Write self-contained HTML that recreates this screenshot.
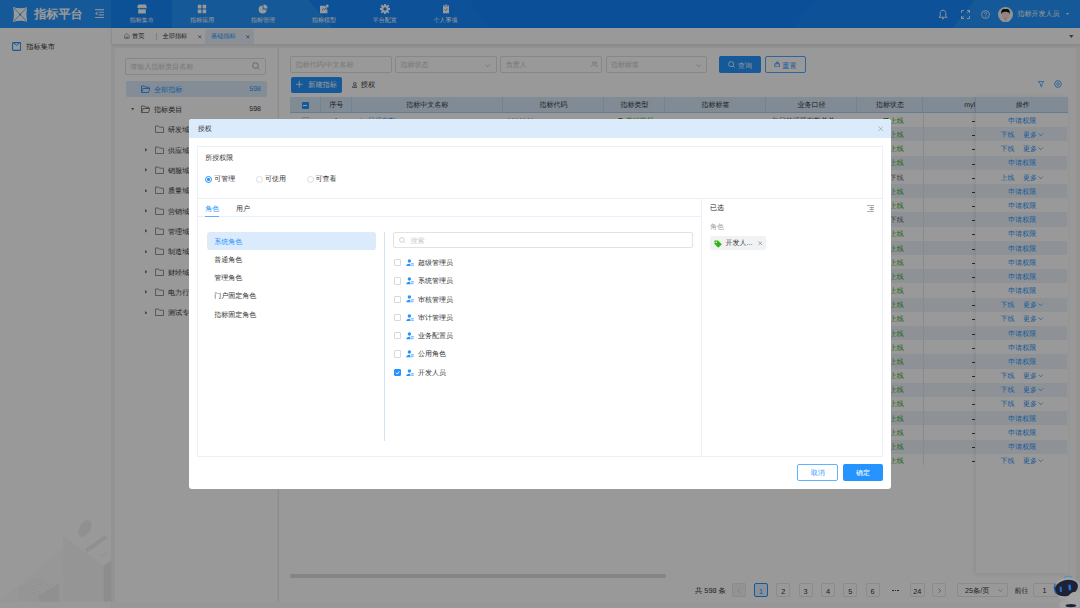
<!DOCTYPE html>
<html lang="zh">
<head>
<meta charset="utf-8">
<title>指标平台</title>
<style>
*{box-sizing:border-box;margin:0;padding:0}
html,body{width:1080px;height:608px;overflow:hidden;background:#f5f5f6;font-family:"Liberation Sans",sans-serif;font-size:7px;color:#333;text-rendering:geometricPrecision}
#app{position:absolute;left:0;top:0;width:1080px;height:608px;overflow:hidden;background:#f5f5f6}
#app div,#app svg,#app span{position:absolute}
.t{white-space:nowrap;line-height:10px;font-size:7px;color:#333}
.w{color:#fff}.p{color:#2594fe}.g{color:#2aa515}
.inp{border:1px solid #e2e2e2;border-radius:2px;background:#fff}
.ph{color:#c9c9c9}
.hl{background:#dcebfb}
.pg{top:583.4px;height:13.6px;width:14px;border:1px solid #e8e8e8;border-radius:2px;background:#fff}
.card{border:1px solid #edf0f3;background:#fff}
.rd{width:7px;height:7px;border:1px solid #dcdcdc;border-radius:50%;background:#fff}
.ck{width:7.4px;height:7.4px;border:1px solid #d9d9d9;border-radius:1px;background:#fff}
</style>
</head>
<body>
<div id="app">
<div style="left:0px;top:0px;width:1080px;height:27.8px;background:#2594fe"></div>
<svg style="left:0px;top:0px;width:1080px;height:27.8px" viewBox="0 0 1080 27.8"><path d="M308.3 0H974.5L953 27.8H332.5z" fill="#1688fd"/><path d="M469 0H815.5L793 27.8H490.5z" fill="#1284fc"/></svg>
<div style="left:111.3px;top:0px;width:60.7px;height:27.8px;background:#1586f8"></div>
<svg style="left:12.8px;top:6.8px;width:14.4px;height:15px" viewBox="0 0 14.4 15"><path d="M0 0Q7.2 2.6 14.4 0Q12.6 7.5 14.4 15Q7.2 12.4 0 15Q1.8 7.5 0 0z" fill="#fff"/><path d="M1 1l12.4 13M13.4 1L1 14" stroke="#2594fe" stroke-width=".7"/><circle cx="7.2" cy="7.5" r=".9" fill="#2594fe"/></svg>
<div class="t" style="top:10.53px;left:34.2px;font-size:12.1px;color:#fff;font-weight:bold;line-height:16px;margin-top:-4.6px;">指标平台</div>
<svg style="left:95px;top:9.2px;width:9px;height:9.2px" viewBox="0 0 9 9.2"><path d="M0 .6h9M3.6 3.3h5.4M3.6 5.9h5.4M0 8.6h9" stroke="#dcebff" stroke-width="1.1"/><path d="M2.4 2.6v4L0 4.6z" fill="#dcebff"/></svg>
<svg style="left:136.65px;top:4px;width:10px;height:10px" viewBox="0 0 10 10"><path d="M1.2 .6h7.6l1 2.8c0 1.3-1.7 1.3-1.9 .2-.2 1.1-1.9 1.1-2 0-.2 1.1-1.8 1.1-2 0C3.8 4.7 2 4.7 .2 3.4z" fill="#fff"/><path d="M1.2 5.3h7.6V9.5H1.2z" fill="#fff"/></svg>
<div class="t" style="top:15.56px;left:81.65px;width:120px;text-align:center;font-size:6px;color:#fff;">指标集市</div>
<svg style="left:197.3px;top:4px;width:10px;height:10px" viewBox="0 0 10 10"><rect x=".8" y=".8" width="3.6" height="3.6" rx=".6" fill="#fff"/><rect x="5.6" y=".8" width="3.6" height="3.6" rx=".6" fill="#fff"/><rect x=".8" y="5.6" width="3.6" height="3.6" rx=".6" fill="#fff"/><rect x="5.6" y="5.6" width="3.6" height="3.6" rx=".6" fill="#fff"/></svg>
<div class="t" style="top:15.56px;left:142.3px;width:120px;text-align:center;font-size:6px;color:#fff;">指标应用</div>
<svg style="left:258px;top:4px;width:10px;height:10px" viewBox="0 0 10 10"><path d="M4.6 1.4A4 4 0 1 0 8.6 5.4H4.6z" fill="#fff"/><path d="M5.5 .4A4 4 0 0 1 9.5 4.4H5.5z" fill="#fff"/></svg>
<div class="t" style="top:15.56px;left:203px;width:120px;text-align:center;font-size:6px;color:#fff;">指标管理</div>
<svg style="left:319px;top:4px;width:10px;height:10px" viewBox="0 0 10 10"><path d="M1 1.8h5.2v1.2H2.2v5h5V5.6h1.2V9.2H1z" fill="#fff"/><path d="M2 2.8h5.6v5.6H2z" fill="#fff"/><circle cx="8.2" cy="1.9" r="1.5" fill="#fff"/><path d="M3 6.6l1.5-2 1.2 1 1.3-1.8" stroke="#2594fe" stroke-width=".8" fill="none"/></svg>
<div class="t" style="top:15.56px;left:264px;width:120px;text-align:center;font-size:6px;color:#fff;">指标模型</div>
<svg style="left:379.7px;top:4px;width:10px;height:10px" viewBox="0 0 10 10"><rect x="4.1" y="-.3" width="1.8" height="2.6" rx=".3" fill="#fff" transform="rotate(0 5 5)"/><rect x="4.1" y="-.3" width="1.8" height="2.6" rx=".3" fill="#fff" transform="rotate(45 5 5)"/><rect x="4.1" y="-.3" width="1.8" height="2.6" rx=".3" fill="#fff" transform="rotate(90 5 5)"/><rect x="4.1" y="-.3" width="1.8" height="2.6" rx=".3" fill="#fff" transform="rotate(135 5 5)"/><rect x="4.1" y="-.3" width="1.8" height="2.6" rx=".3" fill="#fff" transform="rotate(180 5 5)"/><rect x="4.1" y="-.3" width="1.8" height="2.6" rx=".3" fill="#fff" transform="rotate(225 5 5)"/><rect x="4.1" y="-.3" width="1.8" height="2.6" rx=".3" fill="#fff" transform="rotate(270 5 5)"/><rect x="4.1" y="-.3" width="1.8" height="2.6" rx=".3" fill="#fff" transform="rotate(315 5 5)"/><circle cx="5" cy="5" r="3.7" fill="#fff"/><circle cx="5" cy="5" r="1.7" fill="#1688fd"/></svg>
<div class="t" style="top:15.56px;left:324.7px;width:120px;text-align:center;font-size:6px;color:#fff;">平台配置</div>
<svg style="left:440.5px;top:4px;width:10px;height:10px" viewBox="0 0 10 10"><path d="M2 1.5h6V9.3H2z" fill="#fff"/><path d="M3.7 .5h2.6v1.8H3.7z" fill="#fff" stroke="#2594fe" stroke-width=".5"/><path d="M3.6 5.6l1 1 1.8-2" stroke="#2594fe" stroke-width=".8" fill="none"/></svg>
<div class="t" style="top:15.56px;left:385.5px;width:120px;text-align:center;font-size:6px;color:#fff;">个人事项</div>
<svg style="left:938px;top:9px;width:10px;height:11px" viewBox="0 0 10 11"><path d="M5 1.2C3 1.2 2.2 2.8 2.2 4.5V7L1 8.3h8L7.8 7V4.5C7.8 2.8 7 1.2 5 1.2zM4 9.7h2" fill="none" stroke="#fff" stroke-width=".9"/></svg>
<svg style="left:961px;top:10px;width:9px;height:9px" viewBox="0 0 9 9"><path d="M.5 3V.5H3M6 .5h2.5V3M8.5 6v2.5H6M3 8.5H.5V6M6.4 2.6L8.4 .6M2.6 6.4L.6 8.4" fill="none" stroke="#fff" stroke-width=".85"/></svg>
<svg style="left:981px;top:10px;width:9px;height:9px" viewBox="0 0 9 9"><circle cx="4.5" cy="4.5" r="3.9" fill="none" stroke="#fff" stroke-width=".8"/><path d="M3.3 3.6c0-1.6 2.4-1.6 2.4 0 0 .9-1.2.9-1.2 1.9M4.5 6.3v.8" fill="none" stroke="#fff" stroke-width=".8"/></svg>
<svg style="left:998px;top:6.8px;width:15px;height:15px" viewBox="0 0 15 15"><defs><clipPath id="avc"><circle cx="7.5" cy="7.5" r="7.5"/></clipPath></defs><g clip-path="url(#avc)"><rect width="15" height="15" fill="#f4f4f4"/><path d="M2 15C2 11.5 13 11.5 13 15z" fill="#fafafa"/><rect x="6.2" y="10" width="2.6" height="4.5" rx="1" fill="#f3d2c6"/><ellipse cx="7.5" cy="7.8" rx="3.6" ry="4.3" fill="#f6ddd4"/><path d="M3.3 7.5C2.6 1.8 6 1.6 7.5 2.2 9 1.6 12.4 1.8 11.7 7.5 11.2 5.8 10.5 4.9 9.8 5.2 8.5 4.6 6.5 4.6 5.2 5.2 4.5 4.9 3.8 5.8 3.3 7.5z" fill="#111"/><path d="M6.6 11.3h1.8v.6H6.6z" fill="#e58a8a"/></g></svg>
<div class="t" style="top:10.47px;left:1017.5px;color:#fff;">指标开发人员</div>
<svg style="left:1066.4px;top:13.3px;width:3px;height:2px" viewBox="0 0 3 2"><path d="M0 0h3L1.5 2z" fill="#e6f1ff"/></svg>
<div style="left:0px;top:27.8px;width:111px;height:581px;background:#fff"></div>
<svg style="left:11.7px;top:42px;width:9.2px;height:9px" viewBox="0 0 9.2 9"><rect x=".6" y=".6" width="8" height="7.8" rx=".8" fill="none" stroke="#2594fe" stroke-width="1.1"/><path d="M2 1l2.6 2.6L7.2 1" fill="none" stroke="#2594fe" stroke-width="1"/></svg>
<div class="t" style="top:42.49px;left:26.3px;font-size:7.2px;">指标集市</div>
<svg style="left:0px;top:488px;width:112px;height:114px" viewBox="0 0 112 114"><path d="M0 113.5L63 60V113.5z" fill="#fcfcfc"/><path d="M63.2 47.4L103.6 78V113.5H63.2z" fill="#f8f8f8"/><path d="M103.6 78L111.5 72V113.5H103.6z" fill="#ececec"/><ellipse cx="84.9" cy="40.5" rx="5.5" ry="9" transform="rotate(32 84.9 40.5)" fill="#f0f0f0"/><path d="M85 61L105 47l2 3.5L87 64.5z" fill="#f0f0f0"/><path d="M99.5 66l2.5 2.5 5-4" fill="none" stroke="#f0f0f0" stroke-width="1"/><path d="M38.5 108L59.2 95V113.5H38.5z" fill="#f0f0f0"/><path d="M19.7 98L38.5 108V113.5H17z" fill="#f8f8f8"/><path d="M35.5 89.6L38.5 91.2L41.5 89.6" fill="none" stroke="#f1f1f1" stroke-width=".9"/><path d="M32.5 91.2L38.5 94.4L44.5 91.2" fill="none" stroke="#f1f1f1" stroke-width=".9"/><path d="M29.5 92.8L38.5 97.6L47.5 92.8" fill="none" stroke="#f1f1f1" stroke-width=".9"/><path d="M26.5 94.4L38.5 100.8L50.5 94.4" fill="none" stroke="#f1f1f1" stroke-width=".9"/><path d="M23.5 96.0L38.5 104.0L53.5 96.0" fill="none" stroke="#f1f1f1" stroke-width=".9"/><path d="M20.5 97.6L38.5 107.2L56.5 97.6" fill="none" stroke="#f1f1f1" stroke-width=".9"/></svg>
<div style="left:111.5px;top:27.8px;width:968.5px;height:16.6px;background:#fff;box-shadow:0 1px 3px rgba(0,0,0,.1)"></div>
<div style="left:111.5px;top:601.8px;width:968.5px;height:6.2px;background:#fcfcfd"></div>
<svg style="left:124.2px;top:33.3px;width:5.6px;height:5.8px" viewBox="0 0 7 7"><path d="M.5 3.3L3.5 .6l3 2.7V6.5h-6zM2.7 6.5v-1.8h1.6v1.8" fill="none" stroke="#666" stroke-width=".7"/></svg>
<div class="t" style="top:31.88px;left:132px;font-size:6.2px;">首页</div>
<div style="left:156px;top:33px;width:0.6px;height:6.5px;background:#d4d4d4"></div>
<div class="t" style="top:31.88px;left:162.5px;font-size:6.2px;">全部指标</div>
<svg style="left:198.4px;top:35.2px;width:3.6px;height:3.6px" viewBox="0 0 3.6 3.6"><path d="M.3 .3l3 3M3.3 .3l-3 3" stroke="#555" stroke-width=".7"/></svg>
<div style="left:205px;top:28.6px;width:48.6px;height:15.8px;background:#e6f0fb;border-radius:2px 2px 0 0"></div>
<div class="t" style="top:31.88px;left:211px;font-size:6.2px;color:#2594fe;">基础指标</div>
<svg style="left:246.4px;top:35.2px;width:3.6px;height:3.6px" viewBox="0 0 3.6 3.6"><path d="M.3 .3l3 3M3.3 .3l-3 3" stroke="#555" stroke-width=".7"/></svg>
<svg style="left:1069.3px;top:35px;width:4.6px;height:3px" viewBox="0 0 4.6 3"><path d="M0 0h4.6L2.3 3z" fill="#666"/></svg>
<div style="left:115.2px;top:48.2px;width:162.3px;height:553.6px;background:#fff;border-radius:2px 0 0 2px"></div>
<div class="inp" style="left:125px;top:58px;width:141.4px;height:16.6px;"></div>
<div class="t ph" style="top:63.07px;left:130.3px;">请输入指标类目名称</div>
<svg style="left:252px;top:62.3px;width:8px;height:8px" viewBox="0 0 8 8"><circle cx="3.5" cy="3.5" r="2.8" fill="none" stroke="#999" stroke-width="0.8"/><path d="M5.6 5.6L7.4 7.4" stroke="#999" stroke-width="0.8"/></svg>
<div class="hl" style="left:125.5px;top:81px;width:141px;height:16.2px;border-radius:2px"></div>
<svg style="left:140.5px;top:85px;width:9.5px;height:8.5px" viewBox="0 0 9.5 8.5"><path d="M.5 7.5V1h3l1 1.2h3.5v1.3M.5 7.5L2 3.5h7L7.5 7.5z" fill="none" stroke="#2594fe" stroke-width=".9"/></svg>
<div class="t" style="top:84.98px;left:154px;font-size:7.1px;color:#2594fe;">全部指标</div>
<div class="t" style="top:84.97px;left:141px;width:120px;text-align:right;color:#2594fe;">598</div>
<svg style="left:130.6px;top:108.4px;width:3.4px;height:2.4px" viewBox="0 0 3.4 2.4"><path d="M0 0h3.4L1.7 2.4z" fill="#777"/></svg>
<svg style="left:140.5px;top:104.8px;width:9.5px;height:8.5px" viewBox="0 0 9.5 8.5"><path d="M.5 7.5V1h3l1 1.2h3.5v1.3M.5 7.5L2 3.5h7L7.5 7.5z" fill="none" stroke="#777" stroke-width=".9"/></svg>
<div class="t" style="top:104.98px;left:154px;font-size:7.1px;">指标类目</div>
<div class="t" style="top:104.97px;left:141px;width:120px;text-align:right;">598</div>
<svg style="left:155px;top:125.3px;width:9.5px;height:8.5px" viewBox="0 0 9.5 8.5"><path d="M.5 1h3l1 1.2h4v5.3h-8z" fill="none" stroke="#7a7a7a" stroke-width=".8"/></svg>
<div class="t" style="top:125.38px;left:168px;font-size:7.1px;">研发域</div>
<svg style="left:144.7px;top:148.13px;width:2.5px;height:3.6px" viewBox="0 0 2.5 3.6"><path d="M0 0v3.6L2.5 1.8z" fill="#777"/></svg>
<svg style="left:155px;top:145.63px;width:9.5px;height:8.5px" viewBox="0 0 9.5 8.5"><path d="M.5 1h3l1 1.2h4v5.3h-8z" fill="none" stroke="#7a7a7a" stroke-width=".8"/></svg>
<div class="t" style="top:145.71px;left:168px;font-size:7.1px;">供应域</div>
<svg style="left:144.7px;top:168.46px;width:2.5px;height:3.6px" viewBox="0 0 2.5 3.6"><path d="M0 0v3.6L2.5 1.8z" fill="#777"/></svg>
<svg style="left:155px;top:165.96px;width:9.5px;height:8.5px" viewBox="0 0 9.5 8.5"><path d="M.5 1h3l1 1.2h4v5.3h-8z" fill="none" stroke="#7a7a7a" stroke-width=".8"/></svg>
<div class="t" style="top:166.04px;left:168px;font-size:7.1px;">销服域</div>
<svg style="left:144.7px;top:188.79px;width:2.5px;height:3.6px" viewBox="0 0 2.5 3.6"><path d="M0 0v3.6L2.5 1.8z" fill="#777"/></svg>
<svg style="left:155px;top:186.29px;width:9.5px;height:8.5px" viewBox="0 0 9.5 8.5"><path d="M.5 1h3l1 1.2h4v5.3h-8z" fill="none" stroke="#7a7a7a" stroke-width=".8"/></svg>
<div class="t" style="top:186.37px;left:168px;font-size:7.1px;">质量域</div>
<svg style="left:144.7px;top:209.12px;width:2.5px;height:3.6px" viewBox="0 0 2.5 3.6"><path d="M0 0v3.6L2.5 1.8z" fill="#777"/></svg>
<svg style="left:155px;top:206.62px;width:9.5px;height:8.5px" viewBox="0 0 9.5 8.5"><path d="M.5 1h3l1 1.2h4v5.3h-8z" fill="none" stroke="#7a7a7a" stroke-width=".8"/></svg>
<div class="t" style="top:206.7px;left:168px;font-size:7.1px;">营销域</div>
<svg style="left:144.7px;top:229.45px;width:2.5px;height:3.6px" viewBox="0 0 2.5 3.6"><path d="M0 0v3.6L2.5 1.8z" fill="#777"/></svg>
<svg style="left:155px;top:226.95px;width:9.5px;height:8.5px" viewBox="0 0 9.5 8.5"><path d="M.5 1h3l1 1.2h4v5.3h-8z" fill="none" stroke="#7a7a7a" stroke-width=".8"/></svg>
<div class="t" style="top:227.03px;left:168px;font-size:7.1px;">管理域</div>
<svg style="left:144.7px;top:249.78px;width:2.5px;height:3.6px" viewBox="0 0 2.5 3.6"><path d="M0 0v3.6L2.5 1.8z" fill="#777"/></svg>
<svg style="left:155px;top:247.28px;width:9.5px;height:8.5px" viewBox="0 0 9.5 8.5"><path d="M.5 1h3l1 1.2h4v5.3h-8z" fill="none" stroke="#7a7a7a" stroke-width=".8"/></svg>
<div class="t" style="top:247.36px;left:168px;font-size:7.1px;">制造域</div>
<svg style="left:144.7px;top:270.11px;width:2.5px;height:3.6px" viewBox="0 0 2.5 3.6"><path d="M0 0v3.6L2.5 1.8z" fill="#777"/></svg>
<svg style="left:155px;top:267.61px;width:9.5px;height:8.5px" viewBox="0 0 9.5 8.5"><path d="M.5 1h3l1 1.2h4v5.3h-8z" fill="none" stroke="#7a7a7a" stroke-width=".8"/></svg>
<div class="t" style="top:267.69px;left:168px;font-size:7.1px;">财经域</div>
<svg style="left:144.7px;top:290.44px;width:2.5px;height:3.6px" viewBox="0 0 2.5 3.6"><path d="M0 0v3.6L2.5 1.8z" fill="#777"/></svg>
<svg style="left:155px;top:287.94px;width:9.5px;height:8.5px" viewBox="0 0 9.5 8.5"><path d="M.5 1h3l1 1.2h4v5.3h-8z" fill="none" stroke="#7a7a7a" stroke-width=".8"/></svg>
<div class="t" style="top:288.02px;left:168px;font-size:7.1px;">电力行业</div>
<svg style="left:144.7px;top:310.77px;width:2.5px;height:3.6px" viewBox="0 0 2.5 3.6"><path d="M0 0v3.6L2.5 1.8z" fill="#777"/></svg>
<svg style="left:155px;top:308.27px;width:9.5px;height:8.5px" viewBox="0 0 9.5 8.5"><path d="M.5 1h3l1 1.2h4v5.3h-8z" fill="none" stroke="#7a7a7a" stroke-width=".8"/></svg>
<div class="t" style="top:308.35px;left:168px;font-size:7.1px;">测试专用</div>
<div style="left:277.5px;top:48.2px;width:798.5px;height:553.6px;background:#fff;border-radius:2px;border-left:1px solid #e9ebee"></div>
<div class="inp" style="left:290.3px;top:56.2px;width:101.5px;height:16.4px;"></div>
<div class="t ph" style="top:60.57px;left:295.6px;">指标代码/中文名称</div>
<div class="inp" style="left:395.1px;top:56.2px;width:101.5px;height:16.4px;"></div>
<div class="t ph" style="top:60.57px;left:400.4px;">指标状态</div>
<div class="inp" style="left:500.4px;top:56.2px;width:101.5px;height:16.4px;"></div>
<div class="t ph" style="top:60.57px;left:505.7px;">负责人</div>
<div class="inp" style="left:605.6px;top:56.2px;width:101.5px;height:16.4px;"></div>
<div class="t ph" style="top:60.57px;left:610.9px;">指标标签</div>
<svg style="left:485px;top:63.6px;width:5.5px;height:3.4px" viewBox="0 0 6 4"><path d="M.5 .6L3 3.2 5.5 .6" fill="none" stroke="#b5b5b5" stroke-width="0.8"/></svg>
<svg style="left:695.5px;top:63.6px;width:5.5px;height:3.4px" viewBox="0 0 6 4"><path d="M.5 .6L3 3.2 5.5 .6" fill="none" stroke="#b5b5b5" stroke-width="0.8"/></svg>
<svg style="left:591px;top:61px;width:6.8px;height:6.5px" viewBox="0 0 6.8 6.5"><circle cx="2.8" cy="1.9" r="1.3" fill="none" stroke="#bbb" stroke-width=".7"/><path d="M.4 6C.4 3.4 5.2 3.4 5.2 6M4.6 .8c1.6 0 1.6 2.4 0 2.4M5.4 3.8c.9.3 1.1 1.2 1.1 2.2" fill="none" stroke="#bbb" stroke-width=".7"/></svg>
<div style="left:719px;top:56.2px;width:41.5px;height:16.4px;background:#2594fe;border-radius:2px"></div>
<svg style="left:727.8px;top:60.6px;width:7.2px;height:7.2px" viewBox="0 0 8 8"><circle cx="3.5" cy="3.5" r="2.8" fill="none" stroke="#fff" stroke-width="0.9"/><path d="M5.6 5.6L7.4 7.4" stroke="#fff" stroke-width="0.9"/></svg>
<div class="t" style="top:60.58px;left:737.8px;font-size:7.1px;color:#fff;">查询</div>
<div style="left:765px;top:56.2px;width:41px;height:16.4px;background:#fff;border:1px solid #4fa8ff;border-radius:2px"></div>
<svg style="left:773.5px;top:60.8px;width:6.5px;height:6.5px" viewBox="0 0 8 8"><path d="M1 3.5h6V7.2H1zM2.5 3.5V2.2h3v1.3M4 .3v1.9" fill="none" stroke="#2594fe" stroke-width="1"/></svg>
<div class="t" style="top:60.58px;left:782.3px;font-size:7.1px;color:#2594fe;">重置</div>
<div style="left:291.1px;top:76.5px;width:50.5px;height:16.3px;background:#2594fe;border-radius:2px"></div>
<svg style="left:296.4px;top:81.3px;width:6.6px;height:6.6px" viewBox="0 0 6.6 6.6"><path d="M3.3 0v6.6M0 3.3h6.6" stroke="#fff" stroke-width=".8"/></svg>
<div class="t" style="top:80.49px;left:308.2px;font-size:7.2px;color:#fff;">新建指标</div>
<svg style="left:351.6px;top:81.8px;width:5.6px;height:5.8px" viewBox="0 0 5.6 5.8"><circle cx="2.8" cy="1.7" r="1.3" fill="none" stroke="#444" stroke-width=".7"/><path d="M.4 5.4V4.8C.4 3.5 5.2 3.5 5.2 4.8V5.4z" fill="none" stroke="#444" stroke-width=".7"/></svg>
<div class="t" style="top:80.49px;left:360.7px;font-size:7.2px;">授权</div>
<svg style="left:1037.9px;top:81.4px;width:6.4px;height:6.4px" viewBox="0 0 7 7"><path d="M.5 .5h6L4.2 3.5V6.5L2.8 5.5V3.5z" fill="none" stroke="#2594fe" stroke-width=".8"/></svg>
<svg style="left:1054px;top:80.4px;width:8px;height:8px" viewBox="0 0 8 8"><path d="M.5 4L2.2 .9h3.6L7.5 4 5.8 7.1H2.2z" fill="none" stroke="#2594fe" stroke-width=".8"/><circle cx="4" cy="4" r="1.3" fill="none" stroke="#2594fe" stroke-width=".7"/></svg>
<div style="left:290.4px;top:97px;width:777.4px;height:15.7px;background:#d7e8fb;border-bottom:1px solid #a9cdf2"></div>
<div style="left:319.9px;top:97px;width:0.8px;height:15.7px;background:#c2daf4"></div>
<div class="t" style="top:100.97px;left:276.15px;width:120px;text-align:center;color:#333;">序号</div>
<div style="left:350.8px;top:97px;width:0.8px;height:15.7px;background:#c2daf4"></div>
<div class="t" style="top:100.97px;left:367.25px;width:120px;text-align:center;color:#333;">指标中文名称</div>
<div style="left:502.1px;top:97px;width:0.8px;height:15.7px;background:#c2daf4"></div>
<div class="t" style="top:100.97px;left:493.45px;width:120px;text-align:center;color:#333;">指标代码</div>
<div style="left:603.2px;top:97px;width:0.8px;height:15.7px;background:#c2daf4"></div>
<div class="t" style="top:100.97px;left:574.5px;width:120px;text-align:center;color:#333;">指标类型</div>
<div style="left:664.2px;top:97px;width:0.8px;height:15.7px;background:#c2daf4"></div>
<div class="t" style="top:100.97px;left:655.5px;width:120px;text-align:center;color:#333;">指标标签</div>
<div style="left:765.2px;top:97px;width:0.8px;height:15.7px;background:#c2daf4"></div>
<div class="t" style="top:100.97px;left:751.5px;width:120px;text-align:center;color:#333;">业务口径</div>
<div style="left:856.2px;top:97px;width:0.8px;height:15.7px;background:#c2daf4"></div>
<div class="t" style="top:100.97px;left:830px;width:120px;text-align:center;color:#333;">指标状态</div>
<div style="left:922.2px;top:97px;width:0.8px;height:15.7px;background:#c2daf4"></div>
<div class="t" style="top:100.97px;left:855.1px;width:120px;text-align:right;color:#333;">myl</div>
<div style="left:974.7px;top:97px;width:0.8px;height:15.7px;background:#c2daf4"></div>
<div class="t" style="top:100.97px;left:962.7px;width:120px;text-align:center;color:#333;">操作</div>
<div style="left:301.6px;top:101.6px;width:7.3px;height:7px;background:#2594fe;border-radius:1px"><div style="left:1.6px;top:3px;width:4.1px;height:1px;background:#fff"></div></div>
<div style="left:301.7px;top:116.9px;width:7.2px;height:7.2px;border:1px solid #cfcfcf;border-radius:1px;background:#fff"></div>
<div class="t" style="top:116.97px;left:276.1px;width:120px;text-align:center;color:#333;">1</div>
<div style="left:972.4px;top:121px;width:2.3px;height:0.8px;background:#444"></div>
<div style="left:882.5px;top:117.7px;width:6.5px;height:6.5px;border:1px solid #2aa515;border-radius:1px"></div>
<div class="t" style="top:116.97px;left:889.8px;color:#2aa515;">上线</div>
<div class="t" style="top:116.97px;left:962.3px;width:120px;text-align:center;color:#2594fe;">申请权限</div>
<div class="t" style="top:116.97px;left:357.5px;color:#2594fe;">☆</div>
<div class="t" style="top:116.97px;left:367.8px;color:#2594fe;">日活客数</div>
<div class="t" style="top:116.97px;left:508px;">LLLLLLL</div>
<div style="left:617.5px;top:118.2px;width:5.5px;height:5.5px;border:1px solid #2aa515;border-radius:1px"></div>
<div class="t" style="top:116.97px;left:625.8px;color:#2aa515;">基础指标</div>
<div class="t" style="top:116.97px;left:772px;">每日的活跃客数总单</div>
<div style="left:290.4px;top:127.15px;width:777.1px;height:14.2px;background:#edf4fc"></div>
<div style="left:301.7px;top:131.1px;width:7.2px;height:7.2px;border:1px solid #cfcfcf;border-radius:1px;background:#fff"></div>
<div class="t" style="top:131.14px;left:276.1px;width:120px;text-align:center;color:#333;">2</div>
<div style="left:972.4px;top:135.17px;width:2.3px;height:0.8px;background:#444"></div>
<div style="left:882.5px;top:131.87px;width:6.5px;height:6.5px;border:1px solid #2aa515;border-radius:1px"></div>
<div class="t" style="top:131.14px;left:889.8px;color:#2aa515;">上线</div>
<div class="t" style="top:131.14px;left:1000.5px;color:#2594fe;">下线</div>
<div class="t" style="top:131.14px;left:1023px;color:#2594fe;">更多</div>
<svg style="left:1038px;top:133.07px;width:5.5px;height:3.4px" viewBox="0 0 6 4"><path d="M.5 .6L3 3.2 5.5 .6" fill="none" stroke="#2594fe" stroke-width="0.8"/></svg>
<div style="left:301.7px;top:145.3px;width:7.2px;height:7.2px;border:1px solid #cfcfcf;border-radius:1px;background:#fff"></div>
<div class="t" style="top:145.31px;left:276.1px;width:120px;text-align:center;color:#333;">3</div>
<div style="left:972.4px;top:149.34px;width:2.3px;height:0.8px;background:#444"></div>
<div style="left:882.5px;top:146.04px;width:6.5px;height:6.5px;border:1px solid #2aa515;border-radius:1px"></div>
<div class="t" style="top:145.31px;left:889.8px;color:#2aa515;">上线</div>
<div class="t" style="top:145.31px;left:1000.5px;color:#2594fe;">下线</div>
<div class="t" style="top:145.31px;left:1023px;color:#2594fe;">更多</div>
<svg style="left:1038px;top:147.24px;width:5.5px;height:3.4px" viewBox="0 0 6 4"><path d="M.5 .6L3 3.2 5.5 .6" fill="none" stroke="#2594fe" stroke-width="0.8"/></svg>
<div style="left:290.4px;top:155.55px;width:777.1px;height:14.2px;background:#edf4fc"></div>
<div style="left:301.7px;top:159.5px;width:7.2px;height:7.2px;border:1px solid #cfcfcf;border-radius:1px;background:#fff"></div>
<div class="t" style="top:159.48px;left:276.1px;width:120px;text-align:center;color:#333;">4</div>
<div style="left:972.4px;top:163.51px;width:2.3px;height:0.8px;background:#444"></div>
<div style="left:882.5px;top:160.21px;width:6.5px;height:6.5px;border:1px solid #2aa515;border-radius:1px"></div>
<div class="t" style="top:159.48px;left:889.8px;color:#2aa515;">上线</div>
<div class="t" style="top:159.48px;left:962.3px;width:120px;text-align:center;color:#2594fe;">申请权限</div>
<div style="left:301.7px;top:173.7px;width:7.2px;height:7.2px;border:1px solid #cfcfcf;border-radius:1px;background:#fff"></div>
<div class="t" style="top:173.65px;left:276.1px;width:120px;text-align:center;color:#333;">5</div>
<div style="left:972.4px;top:177.68px;width:2.3px;height:0.8px;background:#444"></div>
<div class="t" style="top:173.65px;left:889.8px;color:#666;">下线</div>
<div class="t" style="top:173.65px;left:1000.5px;color:#2594fe;">上线</div>
<div class="t" style="top:173.65px;left:1023px;color:#2594fe;">更多</div>
<svg style="left:1038px;top:175.58px;width:5.5px;height:3.4px" viewBox="0 0 6 4"><path d="M.5 .6L3 3.2 5.5 .6" fill="none" stroke="#2594fe" stroke-width="0.8"/></svg>
<div style="left:290.4px;top:183.95px;width:777.1px;height:14.2px;background:#edf4fc"></div>
<div style="left:301.7px;top:187.9px;width:7.2px;height:7.2px;border:1px solid #cfcfcf;border-radius:1px;background:#fff"></div>
<div class="t" style="top:187.82px;left:276.1px;width:120px;text-align:center;color:#333;">6</div>
<div style="left:972.4px;top:191.85px;width:2.3px;height:0.8px;background:#444"></div>
<div style="left:882.5px;top:188.55px;width:6.5px;height:6.5px;border:1px solid #2aa515;border-radius:1px"></div>
<div class="t" style="top:187.82px;left:889.8px;color:#2aa515;">上线</div>
<div class="t" style="top:187.82px;left:962.3px;width:120px;text-align:center;color:#2594fe;">申请权限</div>
<div style="left:301.7px;top:202.1px;width:7.2px;height:7.2px;border:1px solid #cfcfcf;border-radius:1px;background:#fff"></div>
<div class="t" style="top:201.99px;left:276.1px;width:120px;text-align:center;color:#333;">7</div>
<div style="left:972.4px;top:206.02px;width:2.3px;height:0.8px;background:#444"></div>
<div style="left:882.5px;top:202.72px;width:6.5px;height:6.5px;border:1px solid #2aa515;border-radius:1px"></div>
<div class="t" style="top:201.99px;left:889.8px;color:#2aa515;">上线</div>
<div class="t" style="top:201.99px;left:962.3px;width:120px;text-align:center;color:#2594fe;">申请权限</div>
<div style="left:290.4px;top:212.35px;width:777.1px;height:14.2px;background:#edf4fc"></div>
<div style="left:301.7px;top:216.3px;width:7.2px;height:7.2px;border:1px solid #cfcfcf;border-radius:1px;background:#fff"></div>
<div class="t" style="top:216.16px;left:276.1px;width:120px;text-align:center;color:#333;">8</div>
<div style="left:972.4px;top:220.19px;width:2.3px;height:0.8px;background:#444"></div>
<div class="t" style="top:216.16px;left:889.8px;color:#666;">下线</div>
<div class="t" style="top:216.16px;left:962.3px;width:120px;text-align:center;color:#2594fe;">申请权限</div>
<div style="left:301.7px;top:230.5px;width:7.2px;height:7.2px;border:1px solid #cfcfcf;border-radius:1px;background:#fff"></div>
<div class="t" style="top:230.33px;left:276.1px;width:120px;text-align:center;color:#333;">9</div>
<div style="left:972.4px;top:234.36px;width:2.3px;height:0.8px;background:#444"></div>
<div style="left:882.5px;top:231.06px;width:6.5px;height:6.5px;border:1px solid #2aa515;border-radius:1px"></div>
<div class="t" style="top:230.33px;left:889.8px;color:#2aa515;">上线</div>
<div class="t" style="top:230.33px;left:962.3px;width:120px;text-align:center;color:#2594fe;">申请权限</div>
<div style="left:290.4px;top:240.75px;width:777.1px;height:14.2px;background:#edf4fc"></div>
<div style="left:301.7px;top:244.7px;width:7.2px;height:7.2px;border:1px solid #cfcfcf;border-radius:1px;background:#fff"></div>
<div class="t" style="top:244.5px;left:276.1px;width:120px;text-align:center;color:#333;">10</div>
<div style="left:972.4px;top:248.53px;width:2.3px;height:0.8px;background:#444"></div>
<div style="left:882.5px;top:245.23px;width:6.5px;height:6.5px;border:1px solid #2aa515;border-radius:1px"></div>
<div class="t" style="top:244.5px;left:889.8px;color:#2aa515;">上线</div>
<div class="t" style="top:244.5px;left:962.3px;width:120px;text-align:center;color:#2594fe;">申请权限</div>
<div style="left:301.7px;top:258.9px;width:7.2px;height:7.2px;border:1px solid #cfcfcf;border-radius:1px;background:#fff"></div>
<div class="t" style="top:258.67px;left:276.1px;width:120px;text-align:center;color:#333;">11</div>
<div style="left:972.4px;top:262.7px;width:2.3px;height:0.8px;background:#444"></div>
<div style="left:882.5px;top:259.4px;width:6.5px;height:6.5px;border:1px solid #2aa515;border-radius:1px"></div>
<div class="t" style="top:258.67px;left:889.8px;color:#2aa515;">上线</div>
<div class="t" style="top:258.67px;left:962.3px;width:120px;text-align:center;color:#2594fe;">申请权限</div>
<div style="left:290.4px;top:269.15px;width:777.1px;height:14.2px;background:#edf4fc"></div>
<div style="left:301.7px;top:273.1px;width:7.2px;height:7.2px;border:1px solid #cfcfcf;border-radius:1px;background:#fff"></div>
<div class="t" style="top:272.84px;left:276.1px;width:120px;text-align:center;color:#333;">12</div>
<div style="left:972.4px;top:276.87px;width:2.3px;height:0.8px;background:#444"></div>
<div style="left:882.5px;top:273.57px;width:6.5px;height:6.5px;border:1px solid #2aa515;border-radius:1px"></div>
<div class="t" style="top:272.84px;left:889.8px;color:#2aa515;">上线</div>
<div class="t" style="top:272.84px;left:962.3px;width:120px;text-align:center;color:#2594fe;">申请权限</div>
<div style="left:301.7px;top:287.3px;width:7.2px;height:7.2px;border:1px solid #cfcfcf;border-radius:1px;background:#fff"></div>
<div class="t" style="top:287.01px;left:276.1px;width:120px;text-align:center;color:#333;">13</div>
<div style="left:972.4px;top:291.04px;width:2.3px;height:0.8px;background:#444"></div>
<div style="left:882.5px;top:287.74px;width:6.5px;height:6.5px;border:1px solid #2aa515;border-radius:1px"></div>
<div class="t" style="top:287.01px;left:889.8px;color:#2aa515;">上线</div>
<div class="t" style="top:287.01px;left:962.3px;width:120px;text-align:center;color:#2594fe;">申请权限</div>
<div style="left:290.4px;top:297.55px;width:777.1px;height:14.2px;background:#edf4fc"></div>
<div style="left:301.7px;top:301.5px;width:7.2px;height:7.2px;border:1px solid #cfcfcf;border-radius:1px;background:#fff"></div>
<div class="t" style="top:301.18px;left:276.1px;width:120px;text-align:center;color:#333;">14</div>
<div style="left:972.4px;top:305.21px;width:2.3px;height:0.8px;background:#444"></div>
<div style="left:882.5px;top:301.91px;width:6.5px;height:6.5px;border:1px solid #2aa515;border-radius:1px"></div>
<div class="t" style="top:301.18px;left:889.8px;color:#2aa515;">上线</div>
<div class="t" style="top:301.18px;left:1000.5px;color:#2594fe;">下线</div>
<div class="t" style="top:301.18px;left:1023px;color:#2594fe;">更多</div>
<svg style="left:1038px;top:303.11px;width:5.5px;height:3.4px" viewBox="0 0 6 4"><path d="M.5 .6L3 3.2 5.5 .6" fill="none" stroke="#2594fe" stroke-width="0.8"/></svg>
<div style="left:301.7px;top:315.7px;width:7.2px;height:7.2px;border:1px solid #cfcfcf;border-radius:1px;background:#fff"></div>
<div class="t" style="top:315.35px;left:276.1px;width:120px;text-align:center;color:#333;">15</div>
<div style="left:972.4px;top:319.38px;width:2.3px;height:0.8px;background:#444"></div>
<div style="left:882.5px;top:316.08px;width:6.5px;height:6.5px;border:1px solid #2aa515;border-radius:1px"></div>
<div class="t" style="top:315.35px;left:889.8px;color:#2aa515;">上线</div>
<div class="t" style="top:315.35px;left:1000.5px;color:#2594fe;">下线</div>
<div class="t" style="top:315.35px;left:1023px;color:#2594fe;">更多</div>
<svg style="left:1038px;top:317.28px;width:5.5px;height:3.4px" viewBox="0 0 6 4"><path d="M.5 .6L3 3.2 5.5 .6" fill="none" stroke="#2594fe" stroke-width="0.8"/></svg>
<div style="left:290.4px;top:325.95px;width:777.1px;height:14.2px;background:#edf4fc"></div>
<div style="left:301.7px;top:329.9px;width:7.2px;height:7.2px;border:1px solid #cfcfcf;border-radius:1px;background:#fff"></div>
<div class="t" style="top:329.52px;left:276.1px;width:120px;text-align:center;color:#333;">16</div>
<div style="left:972.4px;top:333.55px;width:2.3px;height:0.8px;background:#444"></div>
<div style="left:882.5px;top:330.25px;width:6.5px;height:6.5px;border:1px solid #2aa515;border-radius:1px"></div>
<div class="t" style="top:329.52px;left:889.8px;color:#2aa515;">上线</div>
<div class="t" style="top:329.52px;left:962.3px;width:120px;text-align:center;color:#2594fe;">申请权限</div>
<div style="left:301.7px;top:344.1px;width:7.2px;height:7.2px;border:1px solid #cfcfcf;border-radius:1px;background:#fff"></div>
<div class="t" style="top:343.69px;left:276.1px;width:120px;text-align:center;color:#333;">17</div>
<div style="left:972.4px;top:347.72px;width:2.3px;height:0.8px;background:#444"></div>
<div style="left:882.5px;top:344.42px;width:6.5px;height:6.5px;border:1px solid #2aa515;border-radius:1px"></div>
<div class="t" style="top:343.69px;left:889.8px;color:#2aa515;">上线</div>
<div class="t" style="top:343.69px;left:962.3px;width:120px;text-align:center;color:#2594fe;">申请权限</div>
<div style="left:290.4px;top:354.35px;width:777.1px;height:14.2px;background:#edf4fc"></div>
<div style="left:301.7px;top:358.3px;width:7.2px;height:7.2px;border:1px solid #cfcfcf;border-radius:1px;background:#fff"></div>
<div class="t" style="top:357.86px;left:276.1px;width:120px;text-align:center;color:#333;">18</div>
<div style="left:972.4px;top:361.89px;width:2.3px;height:0.8px;background:#444"></div>
<div style="left:882.5px;top:358.59px;width:6.5px;height:6.5px;border:1px solid #2aa515;border-radius:1px"></div>
<div class="t" style="top:357.86px;left:889.8px;color:#2aa515;">上线</div>
<div class="t" style="top:357.86px;left:962.3px;width:120px;text-align:center;color:#2594fe;">申请权限</div>
<div style="left:301.7px;top:372.5px;width:7.2px;height:7.2px;border:1px solid #cfcfcf;border-radius:1px;background:#fff"></div>
<div class="t" style="top:372.03px;left:276.1px;width:120px;text-align:center;color:#333;">19</div>
<div style="left:972.4px;top:376.06px;width:2.3px;height:0.8px;background:#444"></div>
<div style="left:882.5px;top:372.76px;width:6.5px;height:6.5px;border:1px solid #2aa515;border-radius:1px"></div>
<div class="t" style="top:372.03px;left:889.8px;color:#2aa515;">上线</div>
<div class="t" style="top:372.03px;left:1000.5px;color:#2594fe;">下线</div>
<div class="t" style="top:372.03px;left:1023px;color:#2594fe;">更多</div>
<svg style="left:1038px;top:373.96px;width:5.5px;height:3.4px" viewBox="0 0 6 4"><path d="M.5 .6L3 3.2 5.5 .6" fill="none" stroke="#2594fe" stroke-width="0.8"/></svg>
<div style="left:290.4px;top:382.75px;width:777.1px;height:14.2px;background:#edf4fc"></div>
<div style="left:301.7px;top:386.7px;width:7.2px;height:7.2px;border:1px solid #cfcfcf;border-radius:1px;background:#fff"></div>
<div class="t" style="top:386.2px;left:276.1px;width:120px;text-align:center;color:#333;">20</div>
<div style="left:972.4px;top:390.23px;width:2.3px;height:0.8px;background:#444"></div>
<div style="left:882.5px;top:386.93px;width:6.5px;height:6.5px;border:1px solid #2aa515;border-radius:1px"></div>
<div class="t" style="top:386.2px;left:889.8px;color:#2aa515;">上线</div>
<div class="t" style="top:386.2px;left:1000.5px;color:#2594fe;">下线</div>
<div class="t" style="top:386.2px;left:1023px;color:#2594fe;">更多</div>
<svg style="left:1038px;top:388.13px;width:5.5px;height:3.4px" viewBox="0 0 6 4"><path d="M.5 .6L3 3.2 5.5 .6" fill="none" stroke="#2594fe" stroke-width="0.8"/></svg>
<div style="left:301.7px;top:400.9px;width:7.2px;height:7.2px;border:1px solid #cfcfcf;border-radius:1px;background:#fff"></div>
<div class="t" style="top:400.37px;left:276.1px;width:120px;text-align:center;color:#333;">21</div>
<div style="left:972.4px;top:404.4px;width:2.3px;height:0.8px;background:#444"></div>
<div style="left:882.5px;top:401.1px;width:6.5px;height:6.5px;border:1px solid #2aa515;border-radius:1px"></div>
<div class="t" style="top:400.37px;left:889.8px;color:#2aa515;">上线</div>
<div class="t" style="top:400.37px;left:1000.5px;color:#2594fe;">下线</div>
<div class="t" style="top:400.37px;left:1023px;color:#2594fe;">更多</div>
<svg style="left:1038px;top:402.3px;width:5.5px;height:3.4px" viewBox="0 0 6 4"><path d="M.5 .6L3 3.2 5.5 .6" fill="none" stroke="#2594fe" stroke-width="0.8"/></svg>
<div style="left:290.4px;top:411.15px;width:777.1px;height:14.2px;background:#edf4fc"></div>
<div style="left:301.7px;top:415.1px;width:7.2px;height:7.2px;border:1px solid #cfcfcf;border-radius:1px;background:#fff"></div>
<div class="t" style="top:414.54px;left:276.1px;width:120px;text-align:center;color:#333;">22</div>
<div style="left:972.4px;top:418.57px;width:2.3px;height:0.8px;background:#444"></div>
<div style="left:882.5px;top:415.27px;width:6.5px;height:6.5px;border:1px solid #2aa515;border-radius:1px"></div>
<div class="t" style="top:414.54px;left:889.8px;color:#2aa515;">上线</div>
<div class="t" style="top:414.54px;left:962.3px;width:120px;text-align:center;color:#2594fe;">申请权限</div>
<div style="left:301.7px;top:429.3px;width:7.2px;height:7.2px;border:1px solid #cfcfcf;border-radius:1px;background:#fff"></div>
<div class="t" style="top:428.71px;left:276.1px;width:120px;text-align:center;color:#333;">23</div>
<div style="left:972.4px;top:432.74px;width:2.3px;height:0.8px;background:#444"></div>
<div style="left:882.5px;top:429.44px;width:6.5px;height:6.5px;border:1px solid #2aa515;border-radius:1px"></div>
<div class="t" style="top:428.71px;left:889.8px;color:#2aa515;">上线</div>
<div class="t" style="top:428.71px;left:962.3px;width:120px;text-align:center;color:#2594fe;">申请权限</div>
<div style="left:290.4px;top:439.55px;width:777.1px;height:14.2px;background:#edf4fc"></div>
<div style="left:301.7px;top:443.5px;width:7.2px;height:7.2px;border:1px solid #cfcfcf;border-radius:1px;background:#fff"></div>
<div class="t" style="top:442.88px;left:276.1px;width:120px;text-align:center;color:#333;">24</div>
<div style="left:972.4px;top:446.91px;width:2.3px;height:0.8px;background:#444"></div>
<div style="left:882.5px;top:443.61px;width:6.5px;height:6.5px;border:1px solid #2aa515;border-radius:1px"></div>
<div class="t" style="top:442.88px;left:889.8px;color:#2aa515;">上线</div>
<div class="t" style="top:442.88px;left:962.3px;width:120px;text-align:center;color:#2594fe;">申请权限</div>
<div style="left:301.7px;top:457.7px;width:7.2px;height:7.2px;border:1px solid #cfcfcf;border-radius:1px;background:#fff"></div>
<div class="t" style="top:457.05px;left:276.1px;width:120px;text-align:center;color:#333;">25</div>
<div style="left:972.4px;top:461.08px;width:2.3px;height:0.8px;background:#444"></div>
<div style="left:882.5px;top:457.78px;width:6.5px;height:6.5px;border:1px solid #2aa515;border-radius:1px"></div>
<div class="t" style="top:457.05px;left:889.8px;color:#2aa515;">上线</div>
<div class="t" style="top:457.05px;left:1000.5px;color:#2594fe;">下线</div>
<div class="t" style="top:457.05px;left:1023px;color:#2594fe;">更多</div>
<svg style="left:1038px;top:458.98px;width:5.5px;height:3.4px" viewBox="0 0 6 4"><path d="M.5 .6L3 3.2 5.5 .6" fill="none" stroke="#2594fe" stroke-width="0.8"/></svg>
<div style="left:923px;top:112.7px;width:0.8px;height:352.8px;background:#dce8f5"></div>
<div style="left:975.5px;top:97px;width:92px;height:475.5px;box-shadow:-1px 1px 5px rgba(0,0,0,.09)"></div>
<div style="left:290px;top:574.2px;width:375.5px;height:3.6px;border-radius:2px;background:#dcdcdc"></div>
<div class="t" style="top:586.2px;left:695px;font-size:7.3px;">共 598 条</div>
<div class="pg" style="left:732px;top:583.4px;width:14px;height:13.6px;background:#f5f5f5;"></div>
<svg style="left:737px;top:587.5px;width:3.4px;height:5.5px" viewBox="0 0 4 6"><path d="M3.4 .5L.8 3l2.6 2.5" fill="none" stroke="#c4c4c4" stroke-width=".8"/></svg>
<div class="pg" style="left:754px;top:583.4px;width:14px;height:13.6px;border-color:#2594fe;background:#e4f1ff;"></div>
<div class="t" style="top:586.5px;left:701px;width:120px;text-align:center;font-size:7.3px;color:#2594fe;">1</div>
<div class="pg" style="left:776.3px;top:583.4px;width:14px;height:13.6px;"></div>
<div class="t" style="top:586.5px;left:723.3px;width:120px;text-align:center;font-size:7.3px;color:#333;">2</div>
<div class="pg" style="left:798.6px;top:583.4px;width:14px;height:13.6px;"></div>
<div class="t" style="top:586.5px;left:745.6px;width:120px;text-align:center;font-size:7.3px;color:#333;">3</div>
<div class="pg" style="left:821px;top:583.4px;width:14px;height:13.6px;"></div>
<div class="t" style="top:586.5px;left:768px;width:120px;text-align:center;font-size:7.3px;color:#333;">4</div>
<div class="pg" style="left:843.3px;top:583.4px;width:14px;height:13.6px;"></div>
<div class="t" style="top:586.5px;left:790.3px;width:120px;text-align:center;font-size:7.3px;color:#333;">5</div>
<div class="pg" style="left:865.6px;top:583.4px;width:14px;height:13.6px;"></div>
<div class="t" style="top:586.5px;left:812.6px;width:120px;text-align:center;font-size:7.3px;color:#333;">6</div>
<div class="pg" style="left:910px;top:583.4px;width:14.5px;height:13.6px;"></div>
<div class="t" style="top:586.5px;left:857.25px;width:120px;text-align:center;font-size:7.3px;color:#333;">24</div>
<div class="pg" style="left:932px;top:583.4px;width:14px;height:13.6px;"></div>
<svg style="left:937.6px;top:587.5px;width:3.4px;height:5.5px" viewBox="0 0 4 6"><path d="M.6 .5L3.2 3 .6 5.5" fill="none" stroke="#666" stroke-width=".8"/></svg>
<div style="left:892.2px;top:589.8px;width:1.6px;height:1px;background:#444"></div>
<div style="left:894.6px;top:589.8px;width:1.6px;height:1px;background:#444"></div>
<div style="left:897px;top:589.8px;width:1.6px;height:1px;background:#444"></div>
<div class="pg" style="left:957px;top:583.4px;width:50.6px;height:13.6px;"></div>
<div class="t" style="top:586.39px;left:965px;font-size:7.2px;">25条/页</div>
<svg style="left:997.5px;top:588.8px;width:5px;height:3.2px" viewBox="0 0 6 4"><path d="M.5 .6L3 3.2 5.5 .6" fill="none" stroke="#999" stroke-width="0.8"/></svg>
<div class="t" style="top:585.98px;left:1014.4px;font-size:7.1px;">前往</div>
<div class="pg" style="left:1032.5px;top:583.4px;width:30px;height:13.6px;"></div>
<div class="t" style="top:586.49px;left:984.5px;width:120px;text-align:center;font-size:7.2px;color:#333;">1</div>
<div style="left:0;top:0;width:1080px;height:608px;background:rgba(0,0,0,.4)"></div>
<svg style="left:1050px;top:572px;width:30px;height:36px" viewBox="0 0 30 36"><defs><linearGradient id="rb" x1="0" y1="0" x2="1" y2="1"><stop offset="0" stop-color="#a9a9a9"/><stop offset="1" stop-color="#9e9e9e"/></linearGradient></defs><path d="M14.3 5.4Q18 3.2 21.6 4.8" fill="none" stroke="#5b8fc8" stroke-width="1.2" stroke-linecap="round"/><ellipse cx="18" cy="17" rx="13.5" ry="10.8" fill="url(#rb)"/><ellipse cx="19.5" cy="33" rx="10.5" ry="6" fill="#a2a2a2"/><ellipse cx="16.3" cy="16" rx="11.9" ry="7.9" transform="rotate(-14 16.3 16)" fill="#1d2236"/><path d="M5 12.5C4 15.5 4.5 19 6.2 21.5" fill="none" stroke="#2a62ad" stroke-width="1.3" stroke-linecap="round"/><circle cx="25.5" cy="27.6" r="7.8" fill="#a5a5a5"/><rect x="9.7" y="14.4" width="2.1" height="5.7" rx="1" fill="#2272cc" transform="rotate(-5 10.7 17)"/><rect x="18.4" y="12.4" width="2.6" height="6" rx="1.2" fill="#2272cc" transform="rotate(-5 19.7 15)"/><ellipse cx="20.9" cy="33.6" rx="5.3" ry="1.7" fill="#1d2236"/></svg>
<div style="left:189px;top:119.2px;width:702px;height:369.4px;background:#fff;border-radius:3px"></div>
<div style="left:189px;top:119.2px;width:702px;height:19.2px;background:#dcebfb;border-radius:3px 3px 0 0"></div>
<div class="t" style="top:124.57px;left:197.7px;">授权</div>
<svg style="left:877.5px;top:126px;width:5.5px;height:5.5px" viewBox="0 0 5.5 5.5"><path d="M.4 .4l4.7 4.7M5.1 .4L.4 5.1" stroke="#999" stroke-width=".6"/></svg>
<div class="card" style="left:197.4px;top:146.2px;width:685.6px;height:53px;"></div>
<div class="t" style="top:153.67px;left:205.3px;">所授权限</div>
<div class="rd" style="left:205.2px;top:175.8px;width:7px;height:7px;border-color:#2594fe"><div style="left:1.2px;top:1.2px;width:2.6px;height:2.6px;border-radius:50%;background:#2594fe"></div></div>
<div class="t" style="top:175.07px;left:214.2px;">可管理</div>
<div class="rd" style="left:256px;top:175.8px;width:7px;height:7px;"></div>
<div class="t" style="top:175.07px;left:265px;">可使用</div>
<div class="rd" style="left:306.6px;top:175.8px;width:7px;height:7px;"></div>
<div class="t" style="top:175.07px;left:315.6px;">可查看</div>
<div class="card" style="left:197.4px;top:198.4px;width:504.6px;height:259px;"></div>
<div style="left:198.4px;top:216px;width:503px;height:1.4px;background:#e6f1fd"></div>
<div class="t" style="top:204.97px;left:205.3px;color:#2594fe;">角色</div>
<div style="left:205.3px;top:215.8px;width:14px;height:1.6px;background:#5aaeff"></div>
<div class="t" style="top:204.97px;left:236px;">用户</div>
<div class="hl" style="left:206.5px;top:232px;width:169.8px;height:18px;border-radius:3px"></div>
<div class="t" style="top:237.57px;left:214.3px;color:#2594fe;">系统角色</div>
<div class="t" style="top:255.87px;left:214.3px;color:#333;">普通角色</div>
<div class="t" style="top:274.17px;left:214.3px;color:#333;">管理角色</div>
<div class="t" style="top:292.47px;left:214.3px;color:#333;">门户固定角色</div>
<div class="t" style="top:310.77px;left:214.3px;color:#333;">指标固定角色</div>
<div style="left:384px;top:232px;width:1px;height:208.5px;background:#cfe3f8"></div>
<div class="inp" style="left:393px;top:232px;width:299.8px;height:16.2px;"></div>
<svg style="left:398.5px;top:236.8px;width:6.5px;height:6.5px" viewBox="0 0 8 8"><circle cx="3.5" cy="3.5" r="2.8" fill="none" stroke="#bbb" stroke-width="0.8"/><path d="M5.6 5.6L7.4 7.4" stroke="#bbb" stroke-width="0.8"/></svg>
<div class="t ph" style="top:237.07px;left:410.5px;">搜索</div>
<div class="ck" style="left:393.8px;top:258.9px;width:7.4px;height:7.4px;"></div>
<svg style="left:406px;top:258.8px;width:8px;height:7.6px" viewBox="0 0 8 7.6"><circle cx="3.4" cy="2" r="1.7" fill="#2594fe"/><path d="M.2 7.2C.2 3.8 6.6 3.8 6.6 7.2z" fill="#2594fe"/><path d="M4.4 4.7h3.6M4.4 6.3h3.6" stroke="#fff" stroke-width="1.7"/><path d="M5 4.7h2.8M5 6.3h2.8" stroke="#2594fe" stroke-width=".7"/></svg>
<div class="t" style="top:258.97px;left:418px;">超级管理员</div>
<div class="ck" style="left:393.8px;top:277.2px;width:7.4px;height:7.4px;"></div>
<svg style="left:406px;top:277.1px;width:8px;height:7.6px" viewBox="0 0 8 7.6"><circle cx="3.4" cy="2" r="1.7" fill="#2594fe"/><path d="M.2 7.2C.2 3.8 6.6 3.8 6.6 7.2z" fill="#2594fe"/><path d="M4.4 4.7h3.6M4.4 6.3h3.6" stroke="#fff" stroke-width="1.7"/><path d="M5 4.7h2.8M5 6.3h2.8" stroke="#2594fe" stroke-width=".7"/></svg>
<div class="t" style="top:277.27px;left:418px;">系统管理员</div>
<div class="ck" style="left:393.8px;top:295.5px;width:7.4px;height:7.4px;"></div>
<svg style="left:406px;top:295.4px;width:8px;height:7.6px" viewBox="0 0 8 7.6"><circle cx="3.4" cy="2" r="1.7" fill="#2594fe"/><path d="M.2 7.2C.2 3.8 6.6 3.8 6.6 7.2z" fill="#2594fe"/><path d="M4.4 4.7h3.6M4.4 6.3h3.6" stroke="#fff" stroke-width="1.7"/><path d="M5 4.7h2.8M5 6.3h2.8" stroke="#2594fe" stroke-width=".7"/></svg>
<div class="t" style="top:295.57px;left:418px;">审核管理员</div>
<div class="ck" style="left:393.8px;top:313.8px;width:7.4px;height:7.4px;"></div>
<svg style="left:406px;top:313.7px;width:8px;height:7.6px" viewBox="0 0 8 7.6"><circle cx="3.4" cy="2" r="1.7" fill="#2594fe"/><path d="M.2 7.2C.2 3.8 6.6 3.8 6.6 7.2z" fill="#2594fe"/><path d="M4.4 4.7h3.6M4.4 6.3h3.6" stroke="#fff" stroke-width="1.7"/><path d="M5 4.7h2.8M5 6.3h2.8" stroke="#2594fe" stroke-width=".7"/></svg>
<div class="t" style="top:313.87px;left:418px;">审计管理员</div>
<div class="ck" style="left:393.8px;top:332.1px;width:7.4px;height:7.4px;"></div>
<svg style="left:406px;top:332px;width:8px;height:7.6px" viewBox="0 0 8 7.6"><circle cx="3.4" cy="2" r="1.7" fill="#2594fe"/><path d="M.2 7.2C.2 3.8 6.6 3.8 6.6 7.2z" fill="#2594fe"/><path d="M4.4 4.7h3.6M4.4 6.3h3.6" stroke="#fff" stroke-width="1.7"/><path d="M5 4.7h2.8M5 6.3h2.8" stroke="#2594fe" stroke-width=".7"/></svg>
<div class="t" style="top:332.17px;left:418px;">业务配置员</div>
<div class="ck" style="left:393.8px;top:350.4px;width:7.4px;height:7.4px;"></div>
<svg style="left:406px;top:350.3px;width:8px;height:7.6px" viewBox="0 0 8 7.6"><circle cx="3.4" cy="2" r="1.7" fill="#2594fe"/><path d="M.2 7.2C.2 3.8 6.6 3.8 6.6 7.2z" fill="#2594fe"/><path d="M4.4 4.7h3.6M4.4 6.3h3.6" stroke="#fff" stroke-width="1.7"/><path d="M5 4.7h2.8M5 6.3h2.8" stroke="#2594fe" stroke-width=".7"/></svg>
<div class="t" style="top:350.47px;left:418px;">公用角色</div>
<div class="ck" style="left:393.8px;top:368.7px;width:7.4px;height:7.4px;background:#2594fe;border-color:#2594fe"><svg style="left:0;top:0;width:5.4px;height:5.4px" viewBox="0 0 5.4 5.4"><path d="M1 2.8l1.2 1.2L4.4 1.5" fill="none" stroke="#fff" stroke-width=".9"/></svg></div>
<svg style="left:406px;top:368.6px;width:8px;height:7.6px" viewBox="0 0 8 7.6"><circle cx="3.4" cy="2" r="1.7" fill="#2594fe"/><path d="M.2 7.2C.2 3.8 6.6 3.8 6.6 7.2z" fill="#2594fe"/><path d="M4.4 4.7h3.6M4.4 6.3h3.6" stroke="#fff" stroke-width="1.7"/><path d="M5 4.7h2.8M5 6.3h2.8" stroke="#2594fe" stroke-width=".7"/></svg>
<div class="t" style="top:368.77px;left:418px;">开发人员</div>
<div class="card" style="left:701px;top:198.4px;width:182px;height:259px;"></div>
<div class="t" style="top:204.27px;left:710px;color:#222;">已选</div>
<svg style="left:866.5px;top:205px;width:7px;height:7px" viewBox="0 0 7 7"><path d="M0 .5h7M2.5 2.5h4.5M2.5 4.5h4.5M0 6.5h7" stroke="#777" stroke-width=".6"/><path d="M4.8 1.5v4" stroke="#777" stroke-width=".6"/></svg>
<div class="t" style="top:223.07px;left:710px;color:#a0a0a0;">角色</div>
<div style="left:710px;top:236.4px;width:56px;height:14px;border-radius:2px;background:#f1f2f3"></div>
<svg style="left:714px;top:239.5px;width:8px;height:8px" viewBox="0 0 8 8"><path d="M.5 .5h3.5L7.8 4.3 4.3 7.8.5 4z" fill="#2fb516"/><circle cx="2.3" cy="2.3" r=".8" fill="#fff"/></svg>
<div class="t" style="top:239.27px;left:725.5px;">开发人...</div>
<svg style="left:757.5px;top:241.2px;width:4.6px;height:4.6px" viewBox="0 0 4.6 4.6"><path d="M.4 .4l3.8 3.8M4.2 .4L.4 4.2" stroke="#777" stroke-width=".6"/></svg>
<div style="left:797.3px;top:464px;width:40.8px;height:17.4px;background:#fff;border:1px solid #62b3ff;border-radius:2px"></div>
<div class="t" style="top:468.67px;left:757.8px;width:120px;text-align:center;color:#2594fe;">取消</div>
<div style="left:842.7px;top:464px;width:40.5px;height:17.4px;background:#2594fe;border-radius:2px"></div>
<div class="t" style="top:468.67px;left:803px;width:120px;text-align:center;color:#fff;">确定</div>
</div>
</body>
</html>
